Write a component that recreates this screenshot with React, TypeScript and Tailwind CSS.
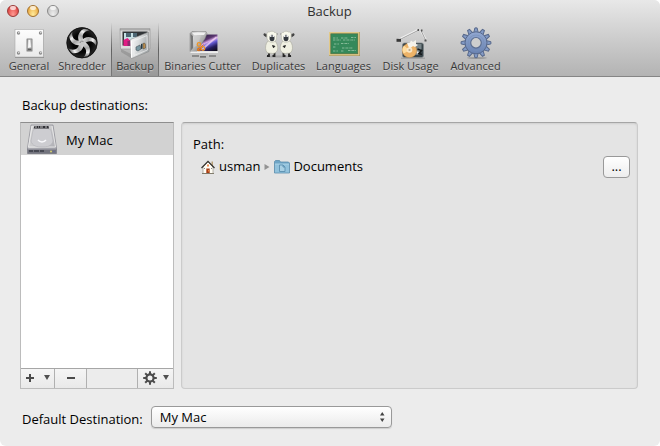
import React from 'react';
import clsx from 'clsx';

const TEETH = [0, 30, 60, 90, 120, 150, 180, 210, 240, 270, 300, 330];
const BLADES = [0, 72, 144, 216, 288];
const SMALL_TEETH = [0, 45, 90, 135, 180, 225, 270, 315];

const GeneralIcon: React.FC = () => (
  <svg className="h-8 w-8" viewBox="0 0 32 32" aria-hidden="true">
    <defs>
      <linearGradient id="plate" x1="0" y1="0" x2="0" y2="1">
        <stop offset="0" stopColor="#fdfdfd" />
        <stop offset="1" stopColor="#e9e9e9" />
      </linearGradient>
    </defs>
    <rect x="2" y="3" width="29" height="28" fill="#8f8f8f" />
    <rect x="2" y="2.500" width="28.500" height="27.500" fill="url(#plate)" stroke="#aaa" strokeWidth="0.6" />
    {[[5.5, 6], [27.5, 6], [5.5, 26], [27.5, 26]].map(([x, y]) => (
      <g key={`${x}-${y}`}>
        <circle cx={x} cy={y} r="1.7" fill="#8b8b8b" />
        <circle cx={x + 0.3} cy={y - 0.4} r="0.8" fill="#dedede" />
      </g>
    ))}
    <rect x="13.5" y="11.500" width="6" height="13" rx="0.6" fill="#888" />
    <rect x="14.8" y="12.500" width="3.600" height="11" fill="#d4d4d4" />
    <path d="M14.500 21.500l.6-9h2.500l.9 8z" fill="#f8f8f8" stroke="#8d8d8d" strokeWidth="0.500" />
    <path d="M14.800 21.500h3.600v2h-3.600z" fill="#5e5e5e" />
  </svg>
);

const ShredderIcon: React.FC = () => (
  <svg className="h-8 w-8" viewBox="0 0 32 32" aria-hidden="true">
    <defs>
      <linearGradient id="blade" x1="0.1" y1="1" x2="0.9" y2="0">
        <stop offset="0" stopColor="#e6e6e6" />
        <stop offset="0.4" stopColor="#a5a5a5" />
        <stop offset="0.65" stopColor="#f2f2f2" />
        <stop offset="1" stopColor="#333" />
      </linearGradient>
      <radialGradient id="pit">
        <stop offset="0.6" stopColor="#050505" />
        <stop offset="1" stopColor="#292929" />
      </radialGradient>
    </defs>
    <circle cx="16" cy="15.8" r="15.5" fill="url(#pit)" />
    {BLADES.map((angle) => (
      <path
        key={angle}
        d="M14 15.500C11.500 11 13 5 19 2.500C22 1.500 25 3 26 4.500C21 3.800 17.500 7 17.500 10.500C17.500 13 18.500 14 18 16z"
        fill="url(#blade)"
        transform={`rotate(${angle - 8} 16 15.8)`}
      />
    ))}
    <circle cx="16" cy="15.8" r="2.800" fill="#c8c8c8" />
    <path d="M14 16c0-2 3-2.500 3.500-1" fill="none" stroke="#777" strokeWidth="0.800" />
    <circle cx="16" cy="15.8" r="15" fill="none" stroke="#151515" />
  </svg>
);

const BackupIcon: React.FC = () => (
  <svg className="h-8 w-8" viewBox="0 0 32 32" aria-hidden="true">
    <defs>
      <linearGradient id="door" x1="0" y1="0" x2="1" y2="0.3">
        <stop offset="0" stopColor="#fff" />
        <stop offset="0.5" stopColor="#d9dcdd" />
        <stop offset="1" stopColor="#a4a9ab" />
      </linearGradient>
    </defs>
    <path d="M1 1.500h30V22H1.500z" fill="#ddd" stroke="#999" strokeWidth="0.700" />
    <path d="M1 2h30v1.500H1z" fill="#777" opacity="0.500" />
    <path d="M3.500 4.500h25v14h-25z" fill="#303437" />
    <path d="M5 6h13v7H5z" fill="#c7e0e4" />
    <path d="M7 6h5v4H7zM14 6h4v4h-4z" fill="#4c6673" />
    <path d="M4.500 13l4-2 3 3v5h-7z" fill="#e11c83" />
    <path d="M8.500 14h3v5h-3z" fill="#8d2a70" />
    <path d="M2 22l10 5v4L2 25z" fill="#777" opacity="0.400" />
    <path d="M11.500 12.500L29.500 5l.5 19.500L12.500 31.500z" fill="url(#door)" stroke="#888" strokeWidth="0.600" />
    <path d="M11.500 12.500l1.500 2v16l-1 .8z" fill="#fff" />
    <path d="M14.500 14L28 8.500l.4 14.500L15 28.500z" fill="none" stroke="#f0f0f0" strokeWidth="0.700" />
    <path d="M17 20l4-2 1 4-3 2-2-1z" fill="#7796a0" stroke="#445158" strokeWidth="0.600" />
    <path d="M22 17l1.500-.6v5l-1.500.6z" fill="#253841" />
    <path d="M24 16.500c1.500-1 2.500 0 2.500 1.500v3l-2.500 1z" fill="#bb8d4e" stroke="#4a4840" strokeWidth="0.500" />
  </svg>
);

const CutterIcon: React.FC = () => (
  <svg className="h-8 w-8" viewBox="0 0 32 32" aria-hidden="true">
    <defs>
      <linearGradient id="screen" x1="0.2" y1="0" x2="0.9" y2="1">
        <stop offset="0" stopColor="#1a1530" />
        <stop offset="0.38" stopColor="#5a366f" />
        <stop offset="0.5" stopColor="#d8a9e8" />
        <stop offset="0.62" stopColor="#655bd4" />
        <stop offset="0.8" stopColor="#241d5a" />
        <stop offset="1" stopColor="#100d1c" />
      </linearGradient>
      <linearGradient id="box" x1="0" y1="0" x2="1" y2="1">
        <stop offset="0" stopColor="#8b8b8b" />
        <stop offset="0.25" stopColor="#d8d8d8" />
        <stop offset="0.6" stopColor="#a8a8a8" />
        <stop offset="1" stopColor="#666" />
      </linearGradient>
    </defs>
    <rect x="4" y="7" width="27" height="18.500" fill="#d8d8d8" />
    <rect x="5" y="7.500" width="25.500" height="16.500" fill="url(#screen)" />
    <path d="M14 22L29 9.500l1 1L16 23z" fill="#f7dcf6" opacity="0.700" />
    <path d="M3 6.500L5 4.500h14l1 2-2 5-5 8-3 5H3z" fill="url(#box)" stroke="#808080" strokeWidth="0.500" />
    <path d="M4.500 5.500h14L17 8H7z" fill="#f0f0f0" />
    <path d="M3.500 7L6 9v12l-2.500 3z" fill="#777" />
    <path d="M7 9l7-.5-3 9-4 3z" fill="#ccc" opacity="0.700" />
    <circle cx="12" cy="17.500" r="1.800" fill="none" stroke="#ee9425" strokeWidth="1.300" />
    <circle cx="16" cy="21.500" r="1.800" fill="none" stroke="#ee9425" strokeWidth="1.300" />
    <circle cx="12" cy="22.500" r="1.300" fill="none" stroke="#dc7417" strokeWidth="1.200" />
    <path d="M10.500 23.500l6-6" stroke="#e9801b" strokeWidth="1" />
    <path d="M3.500 24.500H31v1.500H3.500z" fill="#eee" />
    <path d="M13 26h8v2.500h-8z" fill="#b5b5b5" />
    <path d="M5 29h7M13 29.800h6M22 29h7" stroke="#555" strokeWidth="1.200" />
  </svg>
);

const Sheep: React.FC<{ flip?: boolean }> = ({ flip }) => (
  <g transform={flip ? 'translate(32 0) scale(-1 1)' : undefined}>
    <path d="M6 25.500v3.500H4M11.500 25.500v3.500h-2" stroke="#272727" strokeWidth="1.800" fill="none" />
    <path
      d="M5 14c-2.500 2.500-3 7-2 9.500 1 2.800 3 3 5 2.700 2.500.8 5-.2 6-2.200 1.500-2 .8-7-2-10z"
      fill="#f0f0e2"
      stroke="#a7a79b"
      strokeWidth="0.600"
    />
    <path d="M4 7.500L1 6.800v1.500l2.500 1.500M13 7.500l1.500-.5" fill="#444" stroke="#444" strokeWidth="1" />
    <path
      d="M4 9c-1-3 1-4.500 2.500-4 1.500-1.300 4-1 4.500.2 2.500 0 3.500 2 2.500 4 .5 4-1.500 6-4.500 6S3.500 13 4 9z"
      fill="#f8f8ec"
      stroke="#b0b0a5"
      strokeWidth="0.600"
    />
    <ellipse cx="9" cy="11" rx="2.500" ry="3.200" fill="#34383f" />
    <circle cx="7.800" cy="9" r="0.900" fill="#fff" />
    <circle cx="10.300" cy="9" r="0.900" fill="#fff" />
    <path d="M9.500 18.500l2.500.8-1.500 1.500z" fill="#222" stroke="#222" strokeWidth="0.800" />
  </g>
);

const DuplicatesIcon: React.FC = () => (
  <svg className="h-8 w-8" viewBox="0 0 32 32" aria-hidden="true">
    <ellipse cx="16" cy="29.500" rx="13" ry="0.900" fill="#888" opacity="0.500" />
    <Sheep />
    <Sheep flip />
  </svg>
);

const LanguagesIcon: React.FC = () => (
  <svg className="h-8 w-8" viewBox="0 0 32 32" aria-hidden="true">
    <rect x="1" y="5" width="31" height="24" fill="#978657" />
    <rect x="1" y="5" width="30.500" height="23.500" fill="#e2c988" />
    <rect x="2.800" y="6.800" width="27" height="20" fill="#35895a" stroke="#536b3c" strokeWidth="0.600" />
    <path
      d="M5 11h5M13 11h7M23 10.500h5M5 13h8M15 13h12M6 17h5M13 16.500h8M5 20h3M14 21h11M5 24h5M13 24h3M20 23.500h8"
      stroke="#9bc7a7"
      strokeWidth="0.800"
      strokeDasharray="2 .6 1 .5"
    />
  </svg>
);

const DiskUsageIcon: React.FC = () => (
  <svg className="h-8 w-8" viewBox="0 0 32 32" aria-hidden="true">
    <path d="M3 13L23 3M26 4l5 9" fill="none" stroke="#f0f0f0" strokeWidth="2" />
    <path d="M3 13.500L23 3.500M26 3.500l4.500 9.500" fill="none" stroke="#8a8a8a" strokeWidth="0.800" />
    <rect x="1.500" y="11.800" width="4.500" height="3" fill="#383838" />
    <path d="M22.500 3h1.500M26 3.500h1.500M29.500 13.500h2" stroke="#555" strokeWidth="1.800" />
    <rect x="7.500" y="16" width="21" height="14.500" rx="2" fill="#394449" stroke="#7c8588" strokeWidth="0.700" />
    <path d="M20 17h6.500v5l-3.500 6h-3z" fill="#788589" />
    <path d="M22.500 22l4 1.500-2.500 3 3 1" stroke="#15191a" strokeWidth="1.500" fill="none" />
    <path d="M21 24l3 1-2 2z" fill="#eee" />
    <circle cx="14.500" cy="23.500" r="7.200" fill="#edb368" stroke="#be8743" strokeWidth="0.500" />
    <path d="M14.500 23.500L9 18.500a7 7 0 0 0-.5 8z" fill="#ffdc9e" />
    <path d="M14.500 22L12 16l3-.5 1-2 2 1.500 3-2v4l2 1-3 2-2-1z" fill="#f6f3eb" />
    <circle cx="14.500" cy="23" r="2.800" fill="#f9e7c7" />
    <circle cx="14.500" cy="23" r="1.100" fill="#b7a68a" />
    <path d="M6 31.200h24" stroke="#999" />
  </svg>
);

const AdvancedIcon: React.FC = () => (
  <svg className="h-8 w-8" viewBox="0 0 32 32" aria-hidden="true">
    <defs>
      <linearGradient id="gear" gradientUnits="userSpaceOnUse" x1="16" y1="0" x2="16" y2="32">
        <stop offset="0" stopColor="#9bb0d8" />
        <stop offset="1" stopColor="#607aaa" />
      </linearGradient>
    </defs>
    <ellipse cx="17" cy="31" rx="10" ry="0.900" fill="#777" opacity="0.500" />
    <g stroke="#58698b" strokeWidth="1">
      {TEETH.map((angle) => (
        <path key={angle} d="M13.700 6L14.900.9h2.200L18.300 6z" fill="#829ac6" transform={`rotate(${angle} 16 15.8)`} />
      ))}
      <circle cx="16" cy="15.8" r="11" fill="url(#gear)" />
    </g>
    <circle cx="16" cy="15.8" r="7.800" fill="none" stroke="#768eb9" strokeWidth="0.600" />
    <circle cx="16" cy="15.8" r="5.300" fill="#cecece" stroke="#5d6f91" strokeWidth="1.200" />
  </svg>
);

const DriveIcon: React.FC = () => (
  <svg className="h-8 w-8" viewBox="0 0 32 32" aria-hidden="true">
    <defs>
      <linearGradient id="drive" x1="0" y1="0" x2="1" y2="1">
        <stop offset="0" stopColor="#dededf" />
        <stop offset="0.5" stopColor="#c8c8ca" />
        <stop offset="1" stopColor="#a6a6ac" />
      </linearGradient>
    </defs>
    <path d="M5 2h22l3.500 23v5.500h-29V25z" fill="url(#drive)" stroke="#909098" strokeWidth="0.800" />
    <path d="M6 3L2.500 24h27L26 3" fill="none" stroke="#f0f0f0" strokeWidth="0.800" />
    <path d="M7 7c4-3 14-3 18 0l2 11c-1 5-6 6-11 6S6 23 5 18z" fill="#cdcdd1" stroke="#adadb3" strokeWidth="0.500" />
    <path d="M8.500 3h14l.5 2.500H7.500z" fill="#303035" />
    <path d="M9 4h2M12 4h1M14 4h3M19 4h2" stroke="#e6e6e6" strokeWidth="0.800" />
    <path d="M12 17c2 2.500 6 2.500 8 0" fill="none" stroke="#f8f8fb" strokeWidth="1.500" />
    <path d="M1.500 25.500h29v5.200h-29z" fill="#73747e" />
    <path d="M2 26h28" stroke="#b9b9c0" strokeWidth="0.800" />
    <path d="M3 28h4M8 28h5M14 28h4" stroke="#3a3b45" strokeWidth="1.500" />
    <circle cx="25" cy="28.500" r="1" fill="#d7d16f" />
    <circle cx="28" cy="28.500" r=".8" fill="#60699a" />
  </svg>
);

const HomeIcon: React.FC = () => (
  <svg className="h-4 w-4" viewBox="0 0 16 16" aria-hidden="true">
    <path d="M11.500 2.500h1.500v5h-1.500z" fill="#b8a078" />
    <path d="M3 8l5-5 5 5v6.500H3z" fill="#fffdf5" stroke="#9b9789" strokeWidth="0.700" />
    <path d="M1.500 9L8 2.300 14.500 9" fill="none" stroke="#34332f" strokeWidth="1.200" />
    <path d="M6.300 9.500h3.400v5H6.300z" fill="#a73d16" />
    <path d="M8 11h1.500v1.500H8z" fill="#e98a3e" />
    <path d="M7.200 5.500h1.600v2H7.200z" fill="#e46f2e" />
    <path d="M4 9.500h1M11 9.500h1" stroke="#8c8c8c" />
    <path d="M2 14.500h12" stroke="#827d6d" />
  </svg>
);

const FolderIcon: React.FC = () => (
  <svg className="h-4 w-4" viewBox="0 0 16 16" aria-hidden="true">
    <path d="M.5 14V2.500L1.500 1.500h4l1 1.500h8l1 1V14z" fill="#6ea5c6" stroke="#5d8eac" strokeWidth="0.800" />
    <path d="M1 5h14v8.500H1z" fill="#92c2dc" />
    <path d="M1 5h14" stroke="#b7daeb" strokeWidth="0.800" />
    <path d="M5.500 6h3.500l2 2v4.500H5.500zM9 6v2h2" fill="#a9d0e4" stroke="#5b90b0" strokeWidth="0.900" />
  </svg>
);

const SmallGear: React.FC = () => (
  <svg className="h-4 w-4" viewBox="0 0 16 16" aria-hidden="true">
    {SMALL_TEETH.map((angle) => (
      <path key={angle} d="M7 1.200h2V5H7z" fill="#4c4c4c" transform={`rotate(${angle} 8 8)`} />
    ))}
    <circle cx="8" cy="8" r="3.600" fill="none" stroke="#4c4c4c" strokeWidth="2.200" />
  </svg>
);

const DownArrow: React.FC = () => (
  <svg className="h-2 w-2" viewBox="0 0 8 8" aria-hidden="true">
    <path d="M1 1h6L4 6z" fill="#505050" />
  </svg>
);

const tools = [
  { name: 'General', icon: GeneralIcon, width: 'w-12' },
  { name: 'Shredder', icon: ShredderIcon, width: 'w-[58px]' },
  { name: 'Backup', icon: BackupIcon, width: 'w-12', active: true },
  { name: 'Binaries Cutter', icon: CutterIcon, width: 'w-[87px]' },
  { name: 'Duplicates', icon: DuplicatesIcon, width: 'w-[65px]' },
  { name: 'Languages', icon: LanguagesIcon, width: 'w-[65px]' },
  { name: 'Disk Usage', icon: DiskUsageIcon, width: 'w-[69px]' },
  { name: 'Advanced', icon: AdvancedIcon, width: 'w-[61px]' },
];

const lights = [
  { name: 'Close', color: 'border-[#983a38] bg-radial-[at_50%_85%] from-[#ff9c94] to-[#d8302f]' },
  { name: 'Minimize', color: 'border-[#a0702f] bg-radial-[at_50%_85%] from-[#ffec9c] to-[#e59a2b]' },
  { name: 'Zoom', color: 'border-[#888] bg-radial-[at_50%_85%] from-[#eee] to-[#b9b9b9]' },
];

const TitleBar: React.FC = () => (
  <div className="grid h-[23px] grid-cols-[1fr_auto_1fr] items-center pr-2 pb-px pl-[7px]">
    <div className="flex gap-2">
      {lights.map((light) => (
        <button
          key={light.name}
          type="button"
          aria-label={light.name}
          className={clsx('flex h-3 w-3 justify-center rounded-full border', light.color)}
        >
          <span className="h-1 w-1.5 rounded-full bg-white/70" />
        </button>
      ))}
    </div>
    <h1 className="text-[13px] leading-4 text-[#303030]">Backup</h1>
  </div>
);

const Toolbar: React.FC = () => (
  <nav className="flex h-[53px] pl-[5px]">
    {tools.map((tool) => (
      <button
        key={tool.name}
        type="button"
        aria-pressed={!!tool.active}
        className={clsx(
          'flex shrink-0 flex-col items-center pt-1 text-[11px] leading-[14px] whitespace-nowrap text-[#383838] text-shadow-[0_1px_0_#ffffff60]',
          tool.width,
          tool.active &&
            'border-x [border-image:linear-gradient(#0000,#0007_50%,#0003)_1] bg-linear-to-b from-transparent to-black/15',
        )}
      >
        <tool.icon />
        {tool.name}
      </button>
    ))}
  </nav>
);

const Destinations: React.FC = () => (
  <section aria-label="Backup destinations" className="flex w-[154px] shrink-0 flex-col border border-t-[#8e8e8e] border-[#bcbcbc] bg-white">
    <button type="button" className="flex h-8 items-center gap-2 bg-[#d2d2d2] pl-[5px] text-left text-[13px] font-medium">
      <DriveIcon />
      <span className="pt-1">My Mac</span>
    </button>
    <div className="mt-auto flex h-5 divide-x divide-[#b0b0b0] border-t border-[#a6a6a6] bg-linear-to-b from-[#f5f5f5] to-[#e9e9e9]">
      <button type="button" aria-label="Add destination" className="flex w-[34px] items-center justify-center gap-2">
        <svg className="h-2.5 w-2.5" viewBox="0 0 10 10" aria-hidden="true">
          <path d="M5 1v8M1 5h8" stroke="#4a4a4a" strokeWidth="2" />
        </svg>
        <DownArrow />
      </button>
      <button type="button" aria-label="Remove destination" className="flex w-8 items-center justify-center">
        <svg className="h-2.5 w-2.5" viewBox="0 0 10 10" aria-hidden="true">
          <path d="M1 5h8" stroke="#4a4a4a" strokeWidth="2" />
        </svg>
      </button>
      <div className="flex-1 bg-[#ececec]" />
      <button type="button" aria-label="Actions" className="flex w-[35px] items-center justify-center gap-1">
        <SmallGear />
        <DownArrow />
      </button>
    </div>
  </section>
);

const PathPanel: React.FC = () => (
  <section className="flex-1 rounded-[4px] border border-[#cbcbcb] border-t-[#a5a5a5] bg-[#e4e4e4] pt-[11px] pr-[7px] pl-[11px] shadow-[inset_0_1px_2px_#00000018]">
    <h3 className="leading-5">Path:</h3>
    <div className="mt-0.5 flex items-center justify-between">
      <div className="flex items-center gap-[3px] pl-[7px]">
        <HomeIcon />
        <span>usman</span>
        <svg className="h-2 w-2" viewBox="0 0 8 8" aria-hidden="true">
          <path d="M1.500 1v6l5-3z" fill="#939393" />
        </svg>
        <FolderIcon />
        <span>Documents</span>
      </div>
      <button
        type="button"
        aria-label="Choose path"
        className="flex h-[22px] w-[27px] items-center justify-center rounded-[4px] border border-[#999] bg-linear-to-b from-white to-[#ededed]"
      >
        ...
      </button>
    </div>
  </section>
);

export default function App() {
  return (
    <div className="min-h-screen bg-white font-['Open_Sans',sans-serif] text-[13px] text-black">
      <div className="flex min-h-screen flex-col overflow-hidden rounded-md bg-[#ececec]">
        <header className="border-b border-[#858585] bg-linear-to-b from-[#e8e8e8] to-[#b3b3b3]">
          <TitleBar />
          <Toolbar />
        </header>
        <main className="flex flex-1 flex-col pt-[18px] pr-[22px] pb-[17px] pl-5">
          <h2 className="pl-0.5 leading-5">Backup destinations:</h2>
          <div className="mt-[7px] flex flex-1 gap-[7px]">
            <Destinations />
            <PathPanel />
          </div>
          <div className="mt-[17px] flex items-center gap-2 pl-0.5">
            <label htmlFor="destination" className="pt-1">Default Destination:</label>
            <div className="grid w-[241px] items-center">
              <select
                id="destination"
                className="col-start-1 row-start-1 h-[22px] appearance-none rounded-[4px] border border-[#999] bg-linear-to-b from-white to-[#ebebeb] pl-2 font-medium shadow-[0_1px_1px_#0002]"
              >
                <option>My Mac</option>
              </select>
              <svg className="pointer-events-none col-start-1 row-start-1 mr-1.5 h-3 w-2 justify-self-end" viewBox="0 0 8 12" aria-hidden="true">
                <path d="M2 4.500h4.500L4.250 1zM2 7.500h4.500L4.250 11z" fill="#444" />
              </svg>
            </div>
          </div>
        </main>
      </div>
    </div>
  );
}
